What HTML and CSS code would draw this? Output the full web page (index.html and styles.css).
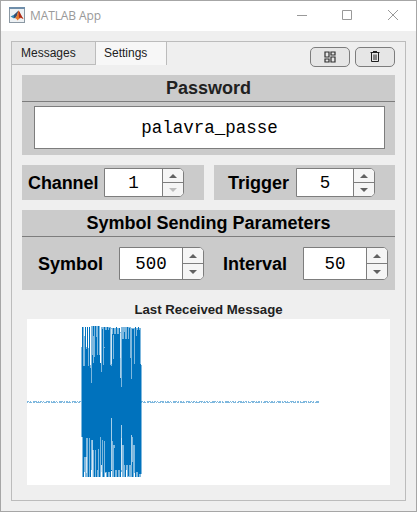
FILE: index.html
```html
<!DOCTYPE html>
<html lang="en">
<head>
<meta charset="utf-8">
<title>MATLAB App</title>
<link rel="stylesheet" href="styles.css">
</head>
<body>
<div class="window">
  <header class="titlebar">
    <svg class="logo" width="16" height="16" viewBox="0 0 16 16">
      <rect x=".5" y=".5" width="15" height="15" fill="#edf1f4" stroke="#8b98a3"/>
      <path d="M0 0h16v2H0z" fill="#6f8eaa"/>
      <path d="M1.500 9.500L5 7.800 7.300 9.500 5 11.500z" fill="#3189b5"/>
      <path d="M5 7.800L9.500 3.500 8 9 6 11.200 5 10.500z" fill="#344e72"/>
      <path d="M9.500 3.500C11 5 12 9 14.500 12 12 10 10.500 11 8.500 13.500 8 12 7 11 6 11.200 8 9.500 8.500 6 9.500 3.500z" fill="#e8792b"/>
      <path d="M9.500 3.500C11 5 12 9 14.500 12 12 10.500 11 10 10 11z" fill="#a92a20"/>
    </svg>
    <span class="caption">MATLAB App</span>
    <svg class="controls" width="102" height="12" viewBox="0 0 102 12" fill="none" stroke="#999">
      <path d="M0 6.500h10M45.500 1.500h9v9h-9zM91 1l10 10M101 1L91 11"/>
    </svg>
  </header>
  <main class="tabgroup">
    <div class="top">
      <nav class="tabs"><span class="tab">Messages</span><span class="tab active">Settings</span></nav>
      <div class="tools">
        <button class="tool" aria-label="Layout"><svg width="12" height="12" viewBox="0 0 12 12" fill="none" stroke="#303030" stroke-width="1.200"><path d="M1 1h4v5H1zM7 1h4v3H7zM1 8h4v3H1zM7 6h4v5H7z"/></svg></button>
        <button class="tool" aria-label="Delete"><svg width="12" height="12" viewBox="0 0 12 12" fill="none" stroke="#202020"><path d="M1.500 1.500h9M4 .7h4" stroke-width="1.200"/><path d="M2.500 2v8.500h7V2M5 3.500v5.500M7 3.500v5.500"/></svg></button>
      </div>
    </div>
    <section class="panel password">
      <h2 class="heading soft">Password</h2>
      <div class="field">palavra_passe</div>
    </section>
    <div class="pair">
      <section class="panel small channel"><span class="label">Channel</span>
        <div class="spinner"><span class="value">1</span><span class="steps"><i class="step"><b class="up"></b></i><i class="step"><b class="down off"></b></i></span></div>
      </section>
      <section class="panel small trigger"><span class="label">Trigger</span>
        <div class="spinner"><span class="value">5</span><span class="steps"><i class="step"><b class="up"></b></i><i class="step"><b class="down"></b></i></span></div>
      </section>
    </div>
    <section class="panel sending">
      <h2 class="heading">Symbol Sending Parameters</h2>
      <div class="params">
        <span class="label symbol">Symbol</span>
        <div class="spinner large"><span class="value">500</span><span class="steps"><i class="step"><b class="up"></b></i><i class="step"><b class="down"></b></i></span></div>
        <span class="label interval">Interval</span>
        <div class="spinner large"><span class="value">50</span><span class="steps"><i class="step"><b class="up"></b></i><i class="step"><b class="down"></b></i></span></div>
      </div>
    </section>
    <h3 class="plot-title">Last Received Message</h3>
    <svg class="plot" width="363" height="166" viewBox="27 319 363 166" shape-rendering="crispEdges">
      <!-- idle signal -->
      <g fill="none" stroke="#0072bd">
        <path d="M27 401.500H81M141 401.500H319" stroke-opacity=".5" stroke-dasharray="2 1 1 2 4 1 1 1"/>
        <path d="M27 402.500H81M141 402.500H319" stroke-opacity=".5" stroke-dasharray="1 1 3 1 2 1 5 1"/>
      </g>
      <!-- faint envelope of the burst -->
      <path fill="#0072bd" fill-opacity=".5" d="M81 347H82V327H90V348H91V326H100V348H101V327H111V328H120V332H121V327H131V328H141V365H142V474H141V477H82V437H81z"/>
      <!-- solid body -->
      <path fill="#0072bd" d="M82 348H83V366H85V335H86V349H87V365H88V366H90V368H91V383H92V355H93V363H94V357H95V337H97V355H100V363H101V372H102V329H103V365H104V348H105V330H110V365H111V366H112V334H113V359H114V334H120V358H121V387H122V339H130V358H131V379H132V329H134V364H135V330H136V336H137V330H140V364H141V474H138V472H135V445H133V437H132V465H124V445H122V438H121V470H115V445H113V441H112V472H105V441H103V440H102V465H101V437H100V449H98V470H97V450H92V440H91V467H90V438H86V457H83V437H82z"/>
      <!-- individual peaks -->
      <g fill="none" stroke="#0072bd">
        <path d="M82.500 327v21M85.500 327v22M87.500 327v38M89.500 327v39M93.500 326v10M95.500 326v12M98.500 326v30M104.500 327v20M107.500 327v5M109.500 328v4M113.500 328v7M116.500 327v8M119.500 328v7M124.500 332v7M127.500 327v14M129.500 328v13M135.500 327v5M138.500 327v5"/>
        <path d="M83.500 457v20M88.500 438v39M90.500 440v37M94.500 448v29M96.500 450v27M99.500 449v28M103.500 440v37M107.500 470v7M110.500 470v7M114.500 448v29M117.500 468v9M120.500 466v11M125.500 464v13M128.500 464v12M132.500 462v15M135.500 471v6M138.500 470v7"/>
      </g>
      <!-- gaps between the peaks -->
      <path fill="none" stroke="#fff" d="M84.500 327v9M86.500 327v20M88.500 327v21M90.500 326v39M100.500 326v37M84.500 472v5M91.500 470v7M101.500 472v6M105.500 473v5M111.500 471v7M121.500 472v5M126.500 470v7M134.500 473v5"/>
      <path fill="none" stroke="#fff" stroke-opacity=".65" d="M86.500 457v16M92.500 440v37M101.500 465v7M111.500 418v52M121.500 425v45M111.500 329v35M120.500 333v45M131.500 435v30"/>
    </svg>
  </main>
</div>
</body>
</html>
```
FILE: styles.css
```css
* { box-sizing: border-box; }
body { margin: 0; font-family: "Liberation Sans", Arial, sans-serif; color: #000; }
.window { width: 417px; height: 512px; border: 1px solid #a6a6a6; background: #efefef; }
.titlebar { height: 30px; background: #fff; display: flex; align-items: center; padding: 0 17px 2px 8px; }
.logo { flex: none; }
.caption { margin-left: 5px; font: 12px "Open Sans", "Noto Sans", sans-serif; color: #999; flex: 1; letter-spacing: -.1px; }
.controls { flex: none; width: 102px; }
.tabgroup { margin: 10px 10px 0; height: 460px; border: 1px solid #bcbcbc; padding: 0 10px; display: flex; flex-direction: column; }
.top { height: 33px; display: flex; justify-content: space-between; margin-left: -10px; flex: none; }
.tabs { display: flex; height: 23px; font-size: 12px; line-height: 22px; color: #212121; }
.tab { width: 84px; padding-left: 9px; background: #e6e6e6; border-right: 1px solid #bcbcbc; border-bottom: 1px solid #bcbcbc; }
.tab.active { width: 71px; padding-left: 8px; background: #f7f7f7; border-bottom: 0; }
.tools { display: flex; gap: 5px; padding-top: 5px; }
.tool { width: 40px; height: 20px; padding: 0; border: 1px solid #7d7d7d; border-radius: 5px; background: #e6e6e6; display: flex; align-items: center; justify-content: center; }
.panel { background: #cbcbcb; flex: none; }
.password, .sending { width: 373px; height: 80px; }
.heading { margin: 0; height: 27px; border-bottom: 1px solid #7d7d7d; font-size: 18px; line-height: 26px; text-align: center; }
.soft { color: #212121; }
.field { margin: 4px 10px 0 12px; height: 43px; border: 1px solid #7d7d7d; background: #fff; font: 17.5px/43px "Liberation Mono", monospace; text-align: center; }
.pair { display: flex; gap: 10px; margin: 10px 0; }
.small { height: 35px; display: flex; align-items: center; }
.channel { width: 182px; padding-left: 6px; }
.trigger { width: 181px; padding-left: 14px; }
.label { font-size: 18px; font-weight: bold; line-height: 34px; }
.channel .label { width: 76px; letter-spacing: -.1px; }
.trigger .label { width: 68px; }
.spinner { display: flex; width: 80px; height: 29px; border: 1px solid #7d7d7d; border-radius: 0 5px 5px 0; background: #fff; overflow: hidden; }
.trigger .spinner { width: 79px; }
.value { flex: 1; font: 17.5px/29px "Liberation Mono", monospace; text-align: center; }
.steps { width: 21px; border-left: 1px solid #7d7d7d; background: #f5f5f5; display: flex; flex-direction: column; }
.large { width: 85px; height: 33px; }
.large .value { line-height: 33px; }
.step { flex: 1; display: flex; align-items: center; justify-content: center; }
.step + .step { border-top: 1px solid #7d7d7d; }
.up, .down { border: 4px solid transparent; border-top-width: 0; border-bottom: 4px solid #616161; }
.down { border-bottom: 0; border-top: 4px solid #616161; }
.down.off { border-top-color: #bdbdbd; }
.params { display: flex; height: 53px; padding: 10px 7px 0 16px; }
.symbol { width: 81px; }
.interval { width: 99px; padding-left: 19px; }
.plot-title { margin: 11px 0 0; height: 18px; line-height: 17px; font-size: 13.2px; text-align: center; color: #212121; }
.plot { display: block; margin-left: 5px; background: #fff; flex: none; }
```
